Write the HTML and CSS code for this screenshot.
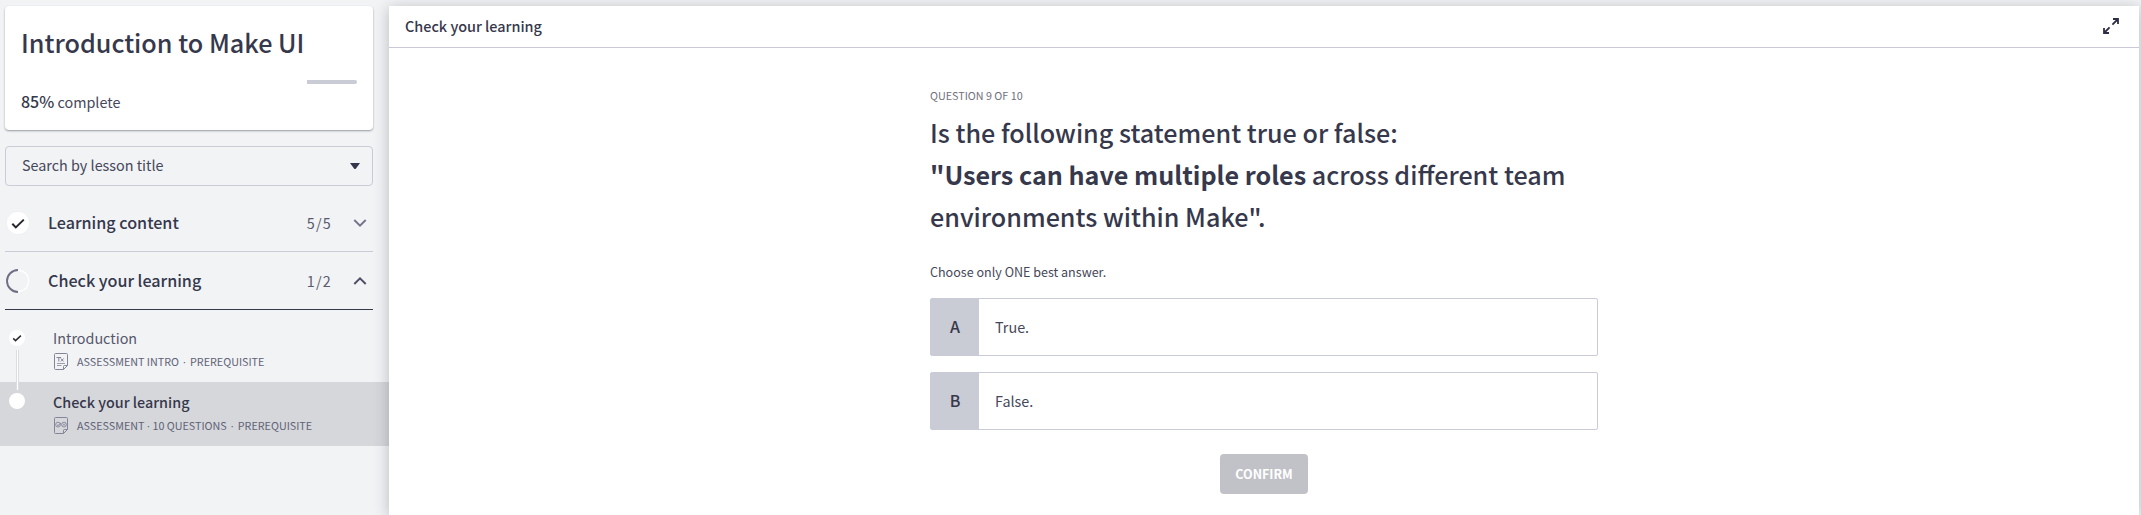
FILE: index.html
```html
<!DOCTYPE html>
<html lang="en">
<head>
<meta charset="utf-8">
<title>Introduction to Make UI</title>
<link rel="stylesheet" href="styles.css">
</head>
<body>
<div class="app">
  <aside class="sidebar">
    <section class="course-card">
      <h1 class="course-title">Introduction to Make UI</h1>
      <div class="progress"><div class="progress-rest"></div></div>
      <p class="progress-label"><span class="percent">85%</span> complete</p>
    </section>
    <div class="search"><span>Search by lesson title</span>
      <svg width="10" height="6" viewBox="0 0 10 6"><path d="M0 0h10L6 5.4Q5 6.4 4 5.4z" fill="#34364c"/></svg>
    </div>
    <div class="section">
      <svg width="24" height="24" viewBox="0 0 24 24"><circle cx="12" cy="12" r="11.7" fill="#fff" stroke="#e4e5e9" stroke-width=".5"/><path d="M6.3 12.8l3.5 3.6L17.8 8.6" fill="none" stroke="#26262e" stroke-width="2"/></svg>
      <span class="section-name">Learning content</span>
      <span class="count">5/5</span>
      <svg width="14" height="8" viewBox="0 0 14 8"><path d="M1.3 1L7 6.6 12.7 1" fill="none" stroke="#74748a" stroke-width="1.9"/></svg>
    </div>
    <div class="section section-open">
      <svg width="24" height="24" viewBox="0 0 24 24"><path d="M12 1a11 11 0 0 1 0 22" fill="none" stroke="#fff" stroke-width="1.8"/><path d="M12 .2a11.8 11.8 0 0 1 0 23.6" fill="none" stroke="#dedfe4" stroke-width=".5" stroke-dasharray="2 1"/><path d="M12 1a11 11 0 0 0 0 22" fill="none" stroke="#6f6f84" stroke-width="1.9"/></svg>
      <span class="section-name">Check your learning</span>
      <span class="count">1/2</span>
      <svg width="14" height="8" viewBox="0 0 14 8"><path d="M1.3 7L7 1.4 12.7 7" fill="none" stroke="#4c4c64" stroke-width="1.9"/></svg>
    </div>
    <ul class="lessons">
      <li class="lesson">
        <div class="rail rail-first">
          <svg width="16" height="16" viewBox="0 0 16 16"><circle cx="8" cy="8" r="8" fill="#fff"/><path d="M4.2 8.4l2.3 2.2 5.4-5" fill="none" stroke="#2c2c34" stroke-width="1.5"/></svg>
          <i class="link"></i>
        </div>
        <div class="lesson-body">
          <div class="lesson-name">Introduction</div>
          <div class="meta">
            <svg width="14" height="17" viewBox="0 0 14 17" fill="none" stroke="#85859a"><path d="M1.5.5h11q1 0 1 1v11L9.5 16.5h-8q-1 0-1-1v-14q0-1 1-1z"/><path d="M13.5 12.5h-3q-1 0-1 1v3M2.5 4.5h4.6M4.8 4.5v4M6.8 5.5l2.8 3M9.6 5.5l-2.8 3"/><path d="M3 10.5h8M3 12.5h4.5" stroke-width=".8"/></svg>
            <span>ASSESSMENT INTRO</span><span class="dot dot-wide">·</span><span>PREREQUISITE</span>
          </div>
        </div>
      </li>
      <li class="lesson lesson-active">
        <div class="rail"><svg width="16" height="16" viewBox="0 0 16 16"><circle cx="8" cy="8" r="8" fill="#fff"/></svg></div>
        <div class="lesson-body">
          <div class="lesson-name lesson-name-active">Check your learning</div>
          <div class="meta">
            <svg width="14" height="17" viewBox="0 0 14 17" fill="none" stroke="#85859a"><path d="M1.5.5h11q1 0 1 1v11L9.5 16.5h-8q-1 0-1-1v-14q0-1 1-1z"/><path d="M13.5 12.5h-3q-1 0-1 1v3"/><g stroke-width=".9"><circle cx="4" cy="7.6" r="2.4"/><circle cx="10" cy="7.6" r="2.4"/><path d="M2.8 7.5l1.2 1.1 3-2.6M9 6.6l2 2m0-2l-2 2"/></g></svg>
            <span>ASSESSMENT</span><span class="dot">·</span><span>10 QUESTIONS</span><span class="dot dot-wide">·</span><span>PREREQUISITE</span>
          </div>
        </div>
      </li>
    </ul>
  </aside>
  <main class="panel">
    <header class="panel-head">
      <span>Check your learning</span>
      <svg width="16" height="16" viewBox="0 0 16 16" fill="none" stroke="#2d2d45" stroke-width="1.8"><path d="M9.4 6.6L15 1M10 1h5v5M6.6 9.4L1 15M1 10v5h5"/></svg>
    </header>
    <section class="question">
      <p class="step">QUESTION 9 OF 10</p>
      <h2 class="prompt">Is the following statement true or false:<br><b>"Users can have multiple roles</b> across different team<br>environments within Make".</h2>
      <p class="hint">Choose only ONE best answer.</p>
      <div class="option"><span class="letter">A</span><span class="answer">True.</span></div>
      <div class="option"><span class="letter">B</span><span class="answer">False.</span></div>
      <button class="confirm">CONFIRM</button>
    </section>
  </main>
</div>
</body>
</html>
```
FILE: styles.css
```css
* { box-sizing: border-box; margin: 0; padding: 0; }
body {
  height: 515px;
  overflow: hidden;
  background: #f1f3f5;
  color: #36384c;
  font-family: "Noto Sans CJK SC", "Source Sans Pro", sans-serif;
  font-size: 14.36px;
}
svg { display: block; flex: none; }
.app { display: flex; height: 515px; padding-top: 6px; }
.sidebar { width: 389px; flex: none; }
.course-card {
  width: 368px;
  height: 124px;
  margin-left: 5px;
  padding: 16px 16px 0;
  background: #fff;
  border-radius: 4px;
  box-shadow: 0 1px 2px rgba(40, 44, 55, .45);
}
.course-title { font-size: 25.18px; font-weight: 500; line-height: 40px; white-space: nowrap; }
.progress { display: flex; justify-content: flex-end; height: 4px; margin-top: 18px; }
.progress-rest { width: 50px; background: #c9cbd5; border-radius: 0 2px 2px 0; }
.progress-label { margin-top: 5px; line-height: 24px; color: #45475a; }
.percent { font-weight: 500; font-size: 16px; color: #36384c; }
.search {
  display: flex;
  align-items: center;
  justify-content: space-between;
  width: 368px;
  height: 40px;
  margin: 16px 0 0 5px;
  padding: 0 12px 0 16px;
  border: 1px solid #c9cbd8;
  border-radius: 4px;
  line-height: 20px;
  color: #45475a;
}
.search span { padding-bottom: 2px; }
.section {
  display: flex;
  align-items: center;
  width: 368px;
  height: 58px;
  margin-left: 5px;
  padding: 1px 6px 0 1px;
  border-bottom: 1px solid #c9cbd8;
}
.search + .section { height: 66px; padding-top: 9px; }
.section-open { border-bottom-color: #36384c; }
.section-name { flex: 1; margin-left: 18px; padding-bottom: 2px; font-size: 16.14px; font-weight: 500; line-height: 24px; }
.count { margin-right: 21px; letter-spacing: 1.2px; line-height: 24px; color: #5b5b70; }
.lessons { list-style: none; padding-top: 8px; }
.lesson { display: flex; height: 64px; padding-left: 9px; }
.lesson-active { background: #d6d7db; }
.rail { width: 44px; padding-top: 11px; flex: none; }
.rail-first { padding-top: 12px; }
.link {
  position: relative;
  z-index: 1;
  display: block;
  width: 3px;
  height: 40px;
  margin: 4px 0 0 7px;
  background: #fff;
  border: solid #dcdde1;
  border-width: 0 1px;
}
.lesson-body { padding-top: 9px; }
.lesson-name { line-height: 22px; color: #55576b; }
.lesson-name-active { font-weight: 500; color: #36384c; }
.meta {
  display: flex;
  align-items: center;
  height: 20px;
  margin-top: 3px;
  padding-left: 1px;
  font-size: 10.76px;
  line-height: 18px;
  color: #606277;
  white-space: pre;
}
.meta svg { margin: 0 9px 1px 0; }
.meta .dot { width: 8px; text-align: center; font-family: "Open Sans", sans-serif; }
.meta .dot-wide { width: 11px; }
.panel { width: 1750px; background: #fff; box-shadow: 0 2px 14px rgba(40, 44, 55, .28); }
.panel-head {
  display: flex;
  align-items: center;
  justify-content: space-between;
  height: 42px;
  padding: 0 20px 0 16px;
  border-bottom: 1px solid #c9c9d8;
  font-size: 14.42px;
  font-weight: 500;
  line-height: 20px;
}
.panel-head span { padding-bottom: 2px; }
.panel-head svg { margin-bottom: 1px; }
.question { width: 668px; margin-left: 541px; padding-top: 38px; display: flex; flex-direction: column; }
.step { font-size: 10.76px; line-height: 20px; color: #70707c; }
.prompt { margin-top: 5px; font-size: 25.14px; font-weight: 500; line-height: 42px; white-space: nowrap; }
.prompt b { font-weight: 700; }
.hint { margin-top: 23px; font-size: 12.56px; line-height: 24px; color: #45475a; }
.option { display: flex; height: 58px; margin-top: 14px; border: 1px solid #c9cbd8; border-radius: 2px; line-height: 56px; }
.option + .option { margin-top: 16px; }
.letter { width: 48px; background: #c9cbd5; text-align: center; font-size: 16px; font-weight: 500; line-height: 55px; }
.answer { padding-left: 16px; color: #45475a; }
.confirm {
  align-self: center;
  width: 88px;
  height: 40px;
  margin-top: 24px;
  border: 0;
  border-radius: 4px;
  background: #c1c2c8;
  color: #fff;
  font: 700 12.5px/40px "Noto Sans CJK SC", sans-serif;
}
```
